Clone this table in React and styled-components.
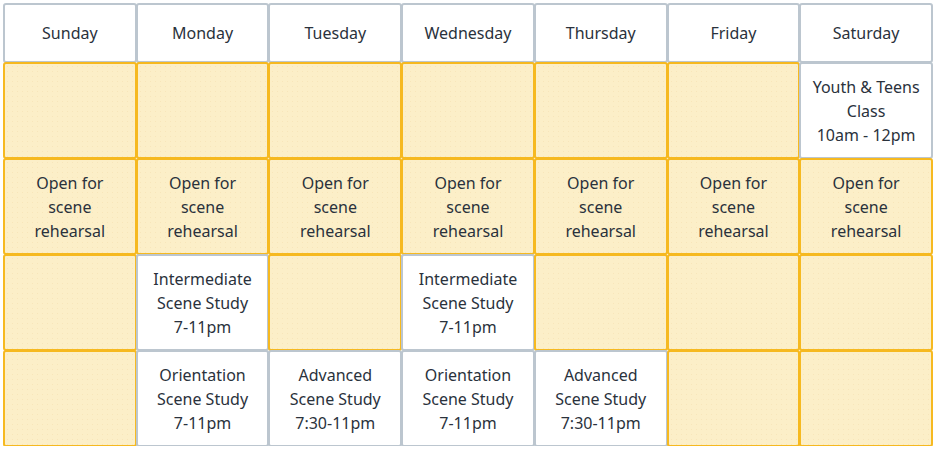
import React from 'react';
import styled, { createGlobalStyle } from 'styled-components';

const GlobalStyle = createGlobalStyle`
  body {
    margin: 0;
    background: #ffffff;
    font-family: "Noto Sans", "DejaVu Sans", sans-serif;
  }
`;

const Grid = styled.div`
  display: grid;
  width: 929px;
  grid-template-columns: repeat(7, 1fr);
  grid-template-rows: 59px repeat(4, 96px);
  margin: 3px 0 0 3px;
`;

const Cell = styled.div`
  display: flex;
  align-items: center;
  justify-content: center;
  text-align: center;
  box-sizing: border-box;
  margin: 0 -1px -1px 0;
  border: 2px solid ${({ $open }) => ($open ? '#f6b920' : '#bcc6cf')};
  border-radius: 3px;
  background-color: ${({ $open }) => ($open ? '#fcefc8' : '#ffffff')};
  background-image: ${({ $open }) =>
    $open ? 'radial-gradient(#f8e6ba 0.5px, transparent 0.8px)' : 'none'};
  background-size: 5px 5px;
  color: #2a323c;
  font-size: 16px;
  line-height: 24px;
  padding: 0 6px;
`;

const days = ['Sunday', 'Monday', 'Tuesday', 'Wednesday', 'Thursday', 'Friday', 'Saturday'];

const open = ['Open for', 'scene', 'rehearsal'];
const inter = ['Intermediate', 'Scene Study', '7-11pm'];
const orient = ['Orientation', 'Scene Study', '7-11pm'];
const adv = ['Advanced', 'Scene Study', '7:30-11pm'];

// null = empty rehearsal slot, open = yellow with text, otherwise a class
const rows = [
  [null, null, null, null, null, null, ['Youth & Teens', 'Class', '10am - 12pm']],
  [open, open, open, open, open, open, open],
  [null, inter, null, inter, null, null, null],
  [null, orient, adv, orient, adv, null, null],
];

const Lines = ({ lines }) => (
  <div>
    {lines.map((l, i) => (
      <div key={i}>{l}</div>
    ))}
  </div>
);

const App = () => (
  <>
    <GlobalStyle />
    <Grid>
      {days.map((d) => (
        <Cell key={d}>{d}</Cell>
      ))}
      {rows.map((row, r) =>
        row.map((slot, c) => {
          const isOpen = slot === null || slot === open;
          return (
            <Cell key={`${r}-${c}`} $open={isOpen}>
              {slot && <Lines lines={slot} />}
            </Cell>
          );
        })
      )}
    </Grid>
  </>
);

export default App;
